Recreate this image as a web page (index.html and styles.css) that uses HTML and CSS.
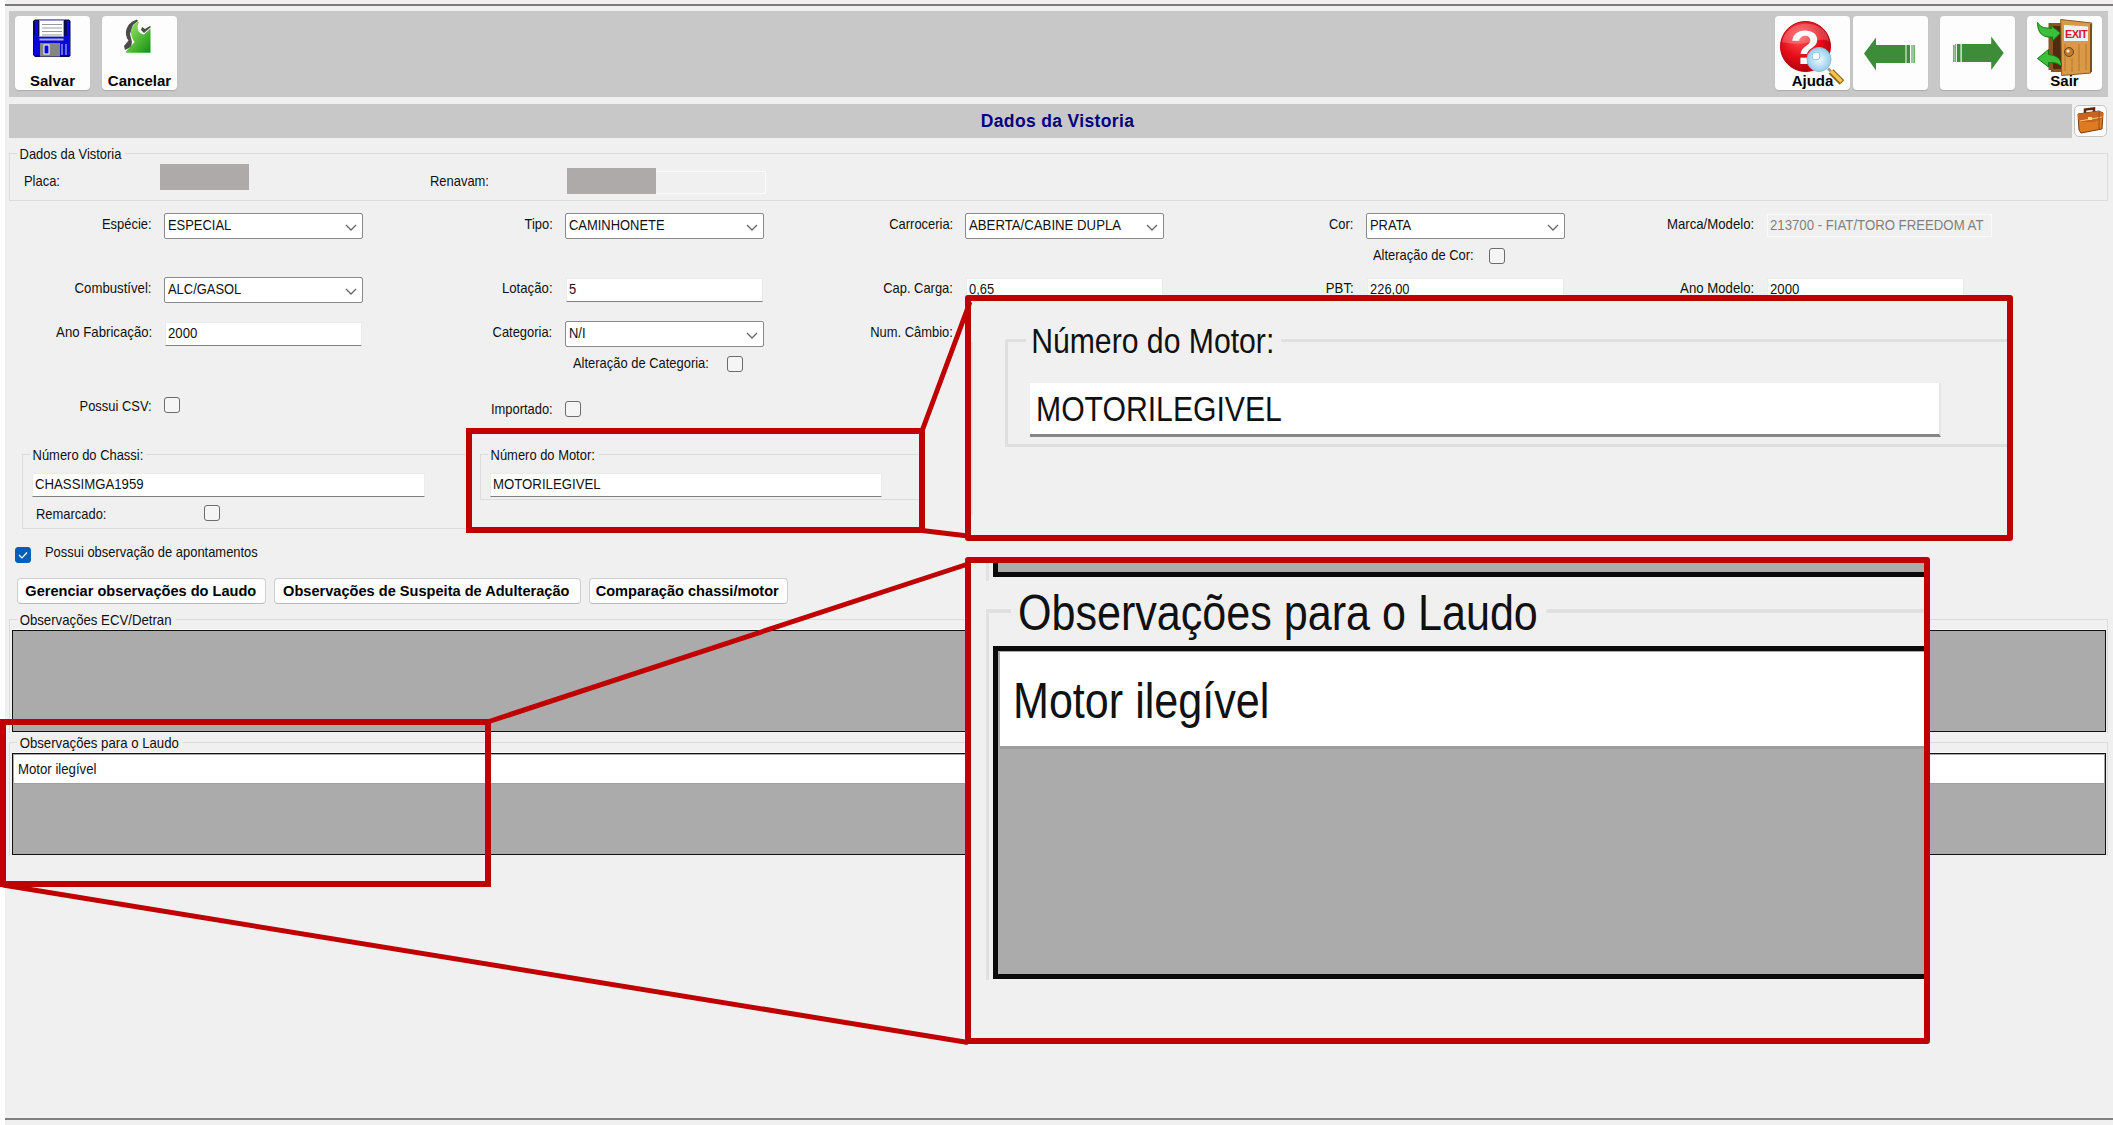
FILE: index.html
```html
<!DOCTYPE html>
<html lang="pt-br">
<head>
    <meta charset="UTF-8">
    <meta name="viewport" content="width=device-width, initial-scale=1.0">
    <title>Dados da Vistoria</title>
    <link rel="stylesheet" href="styles.css">
</head>
<body>
    <div class="window">
        <div class="toolbar">
            <div class="tool">
                <svg width="75" height="74" viewBox="0 0 75 74">
                    <path d="M20 3.500h34l1.500 1.500v35l-1.500 1h-34l-2-2v-34z" fill="#0a0a50"/>
                    <path d="M20 5h3v16h29v-16h2v34h-33l-1.500-1z" fill="#0808e8"/>
                    <rect x="19" y="20" width="36" height="19" fill="#0808d8"/>
                    <path d="M24.500 4.500h24v16h-24z" fill="#fff" stroke="#9a9ad0"/>
                    <path d="M27 8.500h20M27 12h20M27 15.500h20M27 19h20" stroke="#999"/>
                    <path d="M24.500 23.500h24" stroke="#b0b0e8" stroke-width="2"/>
                    <rect x="25" y="27" width="20" height="13.500" fill="#858585"/>
                    <rect x="29" y="29" width="5" height="9" fill="#0808d8" stroke="#fff"/>
                    <path d="M47 28v11M51 28v11" stroke="#ccccf4"/>
                </svg>
                <span>Salvar</span>
            </div>
            <div class="tool gap-12">
                <svg width="75" height="74" viewBox="0 0 75 74">
                    <defs>
                        <linearGradient id="green" x1="0" y1="0" x2="1" y2="1">
                            <stop offset="0" stop-color="#a4ee6a"/>
                            <stop offset="1" stop-color="#109010"/>
                        </linearGradient>
                    </defs>
                    <path d="M35 3.500c-10 3-14 13-8.500 21l-4.500 5.500 1 4 6-3 1-5-2-8 3-9 5-4zM39 14l3 3 7-6-1-1-5 3-3-2z" fill="#4b4b4b"/>
                    <path d="M35 6c-7 5-8 12-2.500 20l-8.500 9.500v1.200h24.500v-24.200l-6.500 6c-6-1-8-6-5-12.500z" fill="url(#green)"/>
                </svg>
                <span>Cancelar</span>
            </div>
            <div class="tool push">
                <svg width="75" height="74" viewBox="0 0 75 74">
                    <defs>
                        <radialGradient id="red" cx=".4" cy=".3" r=".75">
                            <stop offset="0" stop-color="#ff5a5a"/>
                            <stop offset=".55" stop-color="#e40c18"/>
                            <stop offset="1" stop-color="#a8000c"/>
                        </radialGradient>
                        <radialGradient id="lens">
                            <stop offset="0" stop-color="#f0fbff"/>
                            <stop offset="1" stop-color="#92cdee"/>
                        </radialGradient>
                    </defs>
                    <circle cx="30.500" cy="30.500" r="25" fill="url(#red)" stroke="#b3000e"/>
                    <path d="M7 26c4-23 43-25 47-1-12-5-21 7-47 1z" fill="#fff" opacity=".2"/>
                    <text x="30" y="48" class="help-mark">?</text>
                    <circle cx="44" cy="43.500" r="12" fill="url(#lens)" stroke="#9ab8cc"/>
                    <circle cx="41" cy="40" r="4" fill="#fff" stroke="#8fc8ea"/>
                    <path d="M53 52.500l3 3" stroke="#999" stroke-width="3"/>
                    <path d="M56 55.500l11 11" stroke="#8d661c" stroke-width="6.500"/>
                    <path d="M56 55l10.500 10.500" stroke="#f6c545" stroke-width="3.500"/>
                </svg>
                <span>Ajuda</span>
            </div>
            <div class="tool gap-3">
                <svg width="75" height="74" viewBox="0 0 75 74" fill="#3c8c38">
                    <path d="M11 37.500l12-16v7.500h29.500v18h-29.500v7.500z"/>
                    <path d="M53.500 29h3.500v18h-3.500zM58.500 29h1v18h-1zM60.500 29h1.200v18h-1.200z"/>
                </svg>
            </div>
            <div class="tool gap-12">
                <svg width="75" height="74" viewBox="0 0 75 74" fill="#3c8c38">
                    <path d="M63.700 37l-12.500-16.500v7.500h-29.500v18h29.500v8z"/>
                    <path d="M17 28h3.500v18h-3.500zM15.300 28h.8v18h-.8zM13.300 29h1.200v17h-1.200z"/>
                </svg>
            </div>
            <div class="tool gap-12">
                <svg width="75" height="74" viewBox="0 0 75 74">
                    <path d="M21.500 7h13v49h-10.500v-2h-2.500z" fill="#8a5520"/>
                    <path d="M26 10h8v43h-8z" fill="#4f2c10"/>
                    <path d="M33.700 3.500l31 3.500-1 50-29 2.500z" fill="#d99a45" stroke="#8a5a20"/>
                    <path d="M38 28v27M45 42v14M52 28v27M59 28v26" stroke="#b9772b"/>
                    <path d="M64 8v48" stroke="#7c4d17" stroke-width="2"/>
                    <path d="M37 9l24 1.500v14.500h-24z" fill="#e9f5fb"/>
                    <text x="38" y="22" class="exit-sign">EXIT</text>
                    <circle cx="42" cy="36" r="4.500" fill="#c07a30" stroke="#6e4515"/>
                    <circle cx="41" cy="35" r="1.600" fill="#fff0cf"/>
                    <path d="M10.500 6.500c4 6 7 5 14 6l-2-4 11 8.500-8 8 0-4c-10 1-15-4-15-14.500z" fill="#3cc03c" stroke="#137a13"/>
                    <path d="M10.500 42.500l11-9v5c9 1 13 5 13 12-4-4-8-4-13-4v4.500z" fill="#3cc03c" stroke="#137a13"/>
                </svg>
                <span>Sair</span>
            </div>
        </div>

        <div class="title-row">
            <h1>Dados da Vistoria</h1>
            <div class="case-btn">
                <svg width="31" height="30" viewBox="0 0 31 30">
                    <path d="M10 7v-3.500l9-1v4" fill="none" stroke="#5d2410" stroke-width="2.500"/>
                    <path d="M3 8l21-3 4 2-1 16-21 4-2-3z" fill="#dd7a22" stroke="#7c3d12"/>
                    <path d="M3 8l21-3 4 2v5l-9 4-13 0-3-3z" fill="#c96420"/>
                    <path d="M5 15l22-4" stroke="#ffc876"/>
                    <path d="M24 6v17" stroke="#a14e14"/>
                    <rect x="13" y="11" width="4" height="3" fill="#ffe08a"/>
                </svg>
            </div>
        </div>

        <div class="group vistoria">
            <div class="legend">Dados da Vistoria</div>
            <div class="ids">
                <span class="t">Placa:</span>
                <div class="masked"></div>
                <span class="t renavam">Renavam:</span>
                <div class="readonly"><div class="masked"></div></div>
            </div>
        </div>

        <div class="form">
            <div class="cell">
                <label class="t">Espécie:</label>
                <div class="select"><span class="t">ESPECIAL</span><svg width="12" height="8"><path d="M1 1l5 5 5-5"/></svg></div>
            </div>
            <div class="cell">
                <label class="t">Tipo:</label>
                <div class="select"><span class="t">CAMINHONETE</span><svg width="12" height="8"><path d="M1 1l5 5 5-5"/></svg></div>
            </div>
            <div class="cell">
                <label class="t">Carroceria:</label>
                <div class="select"><span class="t wide">ABERTA/CABINE DUPLA</span><svg width="12" height="8"><path d="M1 1l5 5 5-5"/></svg></div>
            </div>
            <div class="cell">
                <label class="t">Cor:</label>
                <div class="select"><span class="t">PRATA</span><svg width="12" height="8"><path d="M1 1l5 5 5-5"/></svg></div>
                <div class="sub cor"><span class="t">Alteração de Cor:</span><i class="check"></i></div>
            </div>
            <div class="cell">
                <label class="t wide">Marca/Modelo:</label>
                <div class="input disabled"><span class="t wide">213700 - FIAT/TORO FREEDOM AT</span></div>
            </div>

            <div class="cell">
                <label class="t wide">Combustível:</label>
                <div class="select"><span class="t">ALC/GASOL</span><svg width="12" height="8"><path d="M1 1l5 5 5-5"/></svg></div>
            </div>
            <div class="cell">
                <label class="t wide">Lotação:</label>
                <div class="input"><span class="t">5</span></div>
            </div>
            <div class="cell">
                <label class="t">Cap. Carga:</label>
                <div class="input"><span class="t">0,65</span></div>
            </div>
            <div class="cell">
                <label class="t wide">PBT:</label>
                <div class="input"><span class="t">226,00</span></div>
            </div>
            <div class="cell">
                <label class="t wide">Ano Modelo:</label>
                <div class="input"><span class="t wide">2000</span></div>
            </div>

            <div class="cell">
                <label class="t wide">Ano Fabricação:</label>
                <div class="input"><span class="t wide">2000</span></div>
            </div>
            <div class="cell">
                <label class="t">Categoria:</label>
                <div class="select"><span class="t">N/I</span><svg width="12" height="8"><path d="M1 1l5 5 5-5"/></svg></div>
                <div class="sub categoria"><span class="t">Alteração de Categoria:</span><i class="check"></i></div>
            </div>
            <div class="cell">
                <label class="t">Num. Câmbio:</label>
            </div>
            <div></div>
            <div></div>

            <div class="cell low">
                <label class="t">Possui CSV:</label>
                <i class="check"></i>
            </div>
            <div class="cell lower">
                <label class="t">Importado:</label>
                <i class="check"></i>
            </div>
        </div>

        <div class="numbers">
            <div class="group chassi">
                <div class="legend">Número do Chassi:</div>
                <div class="input"><span class="t wide">CHASSIMGA1959</span></div>
                <div class="remarcado"><span class="t">Remarcado:</span><i class="check"></i></div>
            </div>
            <div class="group motor">
                <div class="legend">Número do Motor:</div>
                <div class="input"><span class="t wide">MOTORILEGIVEL</span></div>
            </div>
        </div>

        <div class="apontamentos">
            <i class="check on"><svg width="16" height="16" viewBox="0 0 16 16"><path d="M4 8l3 3 5-5.500"/></svg></i>
            <span class="t">Possui observação de apontamentos</span>
        </div>

        <div class="buttons">
            <div class="btn b1"><span>Gerenciar observações do Laudo</span></div>
            <div class="btn b2"><span>Observações de Suspeita de Adulteração</span></div>
            <div class="btn b3"><span>Comparação chassi/motor</span></div>
        </div>

        <div class="group obs">
            <div class="legend wide">Observações ECV/Detran</div>
            <div class="grid"></div>
        </div>
        <div class="group obs">
            <div class="legend wide">Observações para o Laudo</div>
            <div class="grid"><div class="row"><span class="t wide">Motor ilegível</span></div></div>
        </div>
    </div>

    <!-- destaques -->
    <div class="mark mark-motor"></div>
    <div class="mark mark-obs"></div>

    <div class="zoom zoom-motor">
        <div class="edge"></div>
        <div class="zgroup">
            <div class="legend">Número do Motor:</div>
            <div class="zinput"><span class="t">MOTORILEGIVEL</span></div>
        </div>
    </div>

    <div class="zoom zoom-obs">
        <div class="zprev"><div></div></div>
        <div class="zgroup">
            <div class="legend">Observações para o Laudo</div>
            <div class="zgrid"><div class="zrow"><span class="t">Motor ilegível</span></div></div>
        </div>
    </div>

    <svg class="lines" width="2113" height="1125" viewBox="0 0 2113 1125">
        <path d="M922 431L970 302M922 530.500L968 536M489 721.500L968 564M3 885L968 1042.500"/>
    </svg>
</body>
</html>
```

FILE: styles.css
```css
* {
    box-sizing: border-box;
}
body {
    margin: 0;
    width: 2113px;
    height: 1125px;
    overflow: hidden;
    position: relative;
    display: flow-root;
    background: linear-gradient(to right, #fff 5px, #f0f0f0 5px);
    font-family: "Liberation Sans", Arial, sans-serif;
    font-size: 15px;
    line-height: 17px;
    color: #111;
}
.window {
    margin: 4px 0 0 5px;
    height: 1116px;
    border-top: 2px solid #7d7a7c;
    border-bottom: 2px solid #808080;
    padding: 5px 5px 0 4px;
}
/* narrow form font */
.t, .legend {
    display: inline-block;
    white-space: nowrap;
    transform: scaleX(.862);
    transform-origin: left;
}
.wide {
    transform: scaleX(.88);
}

/* toolbar */
.toolbar {
    display: flex;
    height: 86px;
    padding: 5px 6px 0 6px;
    background: #c8c8c8;
}
.tool {
    display: grid;
    width: 75px;
    height: 74px;
    background: #fdfdfd;
    border-radius: 4px;
    box-shadow: 0 1px 1px #aaa;
}
.tool svg, .tool span {
    grid-area: 1 / 1;
}
.tool span {
    align-self: end;
    justify-self: center;
    font-weight: bold;
    color: #000;
    padding-bottom: 1px;
}
.gap-3 {
    margin-left: 3px;
}
.gap-12 {
    margin-left: 12px;
}
.push {
    margin-left: auto;
}
.help-mark {
    font-size: 49px;
    font-weight: bold;
    fill: #fff;
    text-anchor: middle;
}
.exit-sign {
    font-size: 11px;
    font-weight: bold;
    letter-spacing: -.6px;
    fill: #e0142a;
}
.title-row {
    display: flex;
    margin-top: 7px;
    height: 34px;
}
.title-row h1 {
    width: 2063px;
    margin: 0;
    padding-left: 34px;
    background: #c8c8c8;
    color: #000080;
    font-size: 17.5px;
    line-height: 35px;
    letter-spacing: .35px;
    text-align: center;
}
.case-btn {
    width: 33px;
    height: 32px;
    margin: 1px 0 0 2px;
    background: #fdfdfd;
    border: 1px solid #c4c4c4;
    border-radius: 5px;
}
.case-btn svg {
    display: block;
}

/* group boxes */
.group {
    border: 1px solid #dcdcdc;
}
.legend {
    display: block;
    width: max-content;
    height: 17px;
    margin: -9px 0 0 7px;
    padding: 0 4px 0 3px;
    background: #f0f0f0;
}
.vistoria {
    margin-top: 15px;
    height: 48px;
}
.ids {
    display: flex;
}
.ids .t {
    width: 135px;
    margin: 10px 0 0 14px;
}
.masked {
    width: 89px;
    height: 26px;
    background: #aeaaa9;
}
.ids > .masked {
    margin-top: 2px;
    margin-left: 1px;
}
.ids .renavam {
    width: 137px;
    margin-left: 181px;
}
.readonly {
    width: 199px;
    height: 23px;
    margin-top: 9px;
    border: 1px solid #fafafa;
}
.readonly .masked {
    margin: -4px 0 0 -1px;
}

/* fields */
.form {
    display: grid;
    grid-template-columns: repeat(5, 400.5px);
    grid-template-rows: 64px 44px 76px 52px;
    padding: 12px 0 0 3px;
}
.cell {
    display: grid;
    grid-template-columns: 140px 225px;
    column-gap: 12px;
    align-content: start;
}
.cell > label {
    justify-self: end;
    transform-origin: right;
    margin-top: 2px;
}
.cell.low label {
    margin-top: 0;
}
.cell.lower {
    padding-top: 4px;
}
.cell.lower label {
    margin-top: -1px;
}
.select {
    display: flex;
    justify-content: space-between;
    width: 199px;
    height: 26px;
    padding: 2px 5px 0 3px;
    background: #fff;
    border: 1px solid #8a8a8a;
    border-radius: 2px;
}
.select svg {
    margin-top: 8px;
    fill: none;
    stroke: #666;
    stroke-width: 1.3;
}
.input {
    width: 197px;
    height: 24px;
    margin: 1px 0 0 1px;
    padding: 1px 0 0 2px;
    background: #fff;
    border: 1px solid #ebebeb;
    border-bottom: 1px solid #808080;
}
.input.disabled {
    width: 225px;
    height: 23px;
    color: #808080;
    background: #f0f0f0;
    border: 1px solid #fafafa;
}
.check {
    display: block;
    width: 16px;
    height: 16px;
    background: #f5f5f5;
    border: 1px solid #6c6c6c;
    border-radius: 3px;
}
.check.on {
    background: #005fb8;
    border-color: #005fb8;
}
.check.on svg {
    display: block;
    margin: -1px;
    fill: none;
    stroke: #fff;
    stroke-width: 1.2;
}
.sub {
    grid-column: 2;
    display: flex;
    margin: 7px 0 0 7px;
}
.sub .t {
    width: 116px;
}
.sub.categoria {
    margin-left: 8px;
}
.sub.categoria .t {
    width: 154px;
}
.sub .check {
    margin-top: 2px;
}

/* chassi / motor */
.numbers {
    display: flex;
    align-items: flex-start;
    padding: 5px 0 0 13px;
    height: 94px;
}
.chassi {
    width: 446px;
    height: 75px;
}
.chassi .input {
    width: 393px;
    margin: 10px 0 0 9px;
}
.remarcado {
    display: flex;
    margin: 8px 0 0 13px;
}
.remarcado .t {
    width: 168px;
}
.motor {
    width: 445px;
    height: 46px;
    margin-left: 12px;
}
.motor .input {
    width: 392px;
    margin: 10px 0 0 9px;
}
.apontamentos {
    display: flex;
    gap: 14px;
    padding-left: 6px;
    height: 35px;
}
.apontamentos .check {
    margin-top: 4px;
}
.buttons {
    display: flex;
    gap: 8px;
    padding-left: 8px;
}
.btn {
    height: 26px;
    background: #fdfdfd;
    border: 1px solid #cfcfcf;
    border-bottom-color: #bbb;
    border-radius: 4px;
    display: flex;
    justify-content: center;
    white-space: nowrap;
    font-weight: bold;
    color: #000;
    line-height: 24px;
}
.btn span {
    margin-left: -2px;
    transform: scaleX(.972);
}
.b1 {
    width: 249px;
}
.b2 {
    width: 307px;
}
.b3 {
    width: 199px;
}

/* observation grids */
.obs {
    height: 114px;
    margin-top: 15px;
    border-bottom: 0;
}
.obs + .obs {
    margin-top: 9px;
}
.obs .grid {
    height: 102px;
    margin: 2px 1px 0 2px;
    background: #ababab;
    border: 1px solid #111;
    box-shadow: 0 -1px 0 #fafafa;
}
.grid .row {
    height: 29px;
    margin: 1px 1px 0;
    padding: 5px 0 0 4px;
    background: #fff;
    border-bottom: 1px solid #a0a0a0;
}

/* red marks and enlarged views */
.mark, .zoom {
    position: absolute;
    border: 6px solid #c00000;
}
.mark-motor {
    left: 466px;
    top: 428px;
    width: 459px;
    height: 105px;
}
.mark-obs {
    left: 0;
    top: 719px;
    width: 491px;
    height: 168px;
}
.zoom {
    background: #f0f0f0;
    border-radius: 3px;
    overflow: hidden;
}
.zoom-motor {
    left: 965px;
    top: 295px;
    width: 1048px;
    height: 246px;
    display: flex;
    font-size: 35px;
    line-height: 40px;
}
.edge {
    width: 2px;
    height: 173px;
    margin-top: 41px;
    background: #e2e2e2;
}
.zoom-motor .zgroup {
    flex: 1;
    height: 108px;
    margin: 38px 0 0 32px;
    border: 3px solid #dfdfdf;
    border-right: 0;
}
.zoom-motor .legend {
    height: 40px;
    margin: -21px 0 0 18px;
    padding: 0 8px 0 6px;
}
.zinput {
    width: 911px;
    height: 54px;
    margin-top: 22px;
    margin-left: 22px;
    padding: 6px 0 0 6px;
    background: #fff;
    border-right: 2px solid #e6e6e6;
    border-bottom: 3px solid #868686;
}
.zoom-obs {
    left: 965px;
    top: 557px;
    width: 965px;
    height: 487px;
    font-size: 50px;
    line-height: 56px;
}
.zprev {
    height: 18px;
    margin-left: 15px;
    padding-left: 4px;
    border-left: 3px solid #e2e2e2;
}
.zprev div {
    height: 14px;
    background: #ababab;
    border-left: 5px solid #0a0a0a;
    border-bottom: 5px solid #0a0a0a;
}
.zoom-obs .zgroup {
    height: 371px;
    margin: 28px 0 0 15px;
    border-left: 3px solid #e0e0e0;
    border-top: 4px solid #e0e0e0;
}
.zoom-obs .legend {
    height: 50px;
    margin: -28px 0 0 22px;
    padding: 0 10px 0 8px;
}
.zgrid {
    height: 333px;
    margin: 11px 0 0 4px;
    background: #ababab;
    border: 5px solid #0a0a0a;
    border-right: 0;
}
.zrow {
    height: 97px;
    margin: 1px 0 0 2px;
    padding: 21px 0 0 13px;
    background: #fff;
    border-bottom: 3px solid #9e9e9e;
}
.lines {
    position: absolute;
    left: 0;
    top: 0;
    fill: none;
    stroke: #c00000;
    stroke-width: 5;
}
```
